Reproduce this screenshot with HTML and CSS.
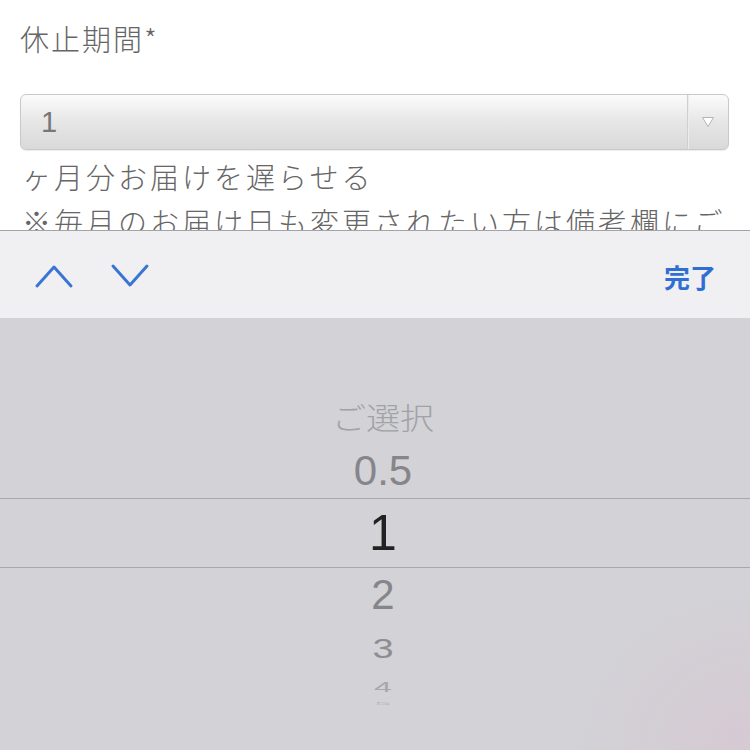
FILE: index.html
```html
<html>
<head>
    <meta charset="utf-8">
    <title>休止期間</title>
    <link rel="stylesheet" href="styles.css">
</head>
<body>
    <div class="form">
        <div class="field-label">休止期間*</div>
        <div class="select">
            <span class="select-value">1</span>
            <span class="select-arrow">
                <svg width="14" height="12" viewBox="0 0 14 12"><path d="M1.5 1.5 L12.5 1.5 L7 10.5 Z" fill="#fff" stroke="#b4b4b4" stroke-width="1"/></svg>
            </span>
        </div>
        <p class="note">ヶ月分お届けを遅らせる</p>
        <p class="note">※毎月のお届け日も変更されたい方は備考欄にご</p>
    </div>

    <div class="toolbar">
        <div class="nav">
            <svg class="chev" width="40" height="26" viewBox="0 0 40 26"><path d="M3 23 L20 4 L37 23" fill="none" stroke="#3a74d4" stroke-width="3" stroke-linecap="round" stroke-linejoin="round"/></svg>
            <svg class="chev" width="40" height="26" viewBox="0 0 40 26"><path d="M3 3 L20 22 L37 3" fill="none" stroke="#3a74d4" stroke-width="3" stroke-linecap="round" stroke-linejoin="round"/></svg>
        </div>
        <div class="done">完了</div>
    </div>

    <div class="picker">
        <div class="row row-far">ご選択</div>
        <div class="row row-near">0.5</div>
        <div class="row row-selected">1</div>
        <div class="row row-near">2</div>
        <div class="row row-3">3</div>
        <div class="row row-4">4</div>
        <div class="row row-5">5</div>
    </div>
</body>
</html>
```

FILE: styles.css
```css
body {
    margin: 0;
    width: 750px;
    height: 750px;
    overflow: hidden;
    background: white;
    font-family: "Noto Sans CJK JP", "Liberation Sans", sans-serif;
}

.form {
    height: 230px;
    overflow: hidden;
    padding: 0 21px 0 20px;
}

.field-label {
    font-size: 29px;
    letter-spacing: 2px;
    color: #666;
    padding-top: 16px;
    line-height: 44px;
    font-weight: 300;
}

.select {
    margin-top: 34px;
    height: 54px;
    border: 1px solid #c9c9c9;
    border-radius: 6px;
    background: linear-gradient(#fbfbfb, #e6e6e6 50%, #d9d9d9);
    display: flex;
    align-items: center;
    justify-content: space-between;
    box-shadow: 0 1px 1px rgba(0, 0, 0, 0.08);
}

.select-value {
    font-family: "Liberation Sans", sans-serif;
    font-size: 29px;
    color: #777;
    padding-left: 20px;
    font-weight: 300;
}

.select-arrow {
    width: 40px;
    height: 54px;
    border-left: 1px solid #cfcfcf;
    box-shadow: inset 1px 0 0 #ececec;
    display: flex;
    align-items: center;
    justify-content: center;
}

.note {
    margin: 0;
    font-size: 29px;
    letter-spacing: 3px;
    color: #666;
    line-height: 45px;
    font-weight: 300;
    white-space: nowrap;
    padding-left: 2px;
}

.note:first-of-type {
    margin-top: 4px;
}

.toolbar {
    height: 87px;
    border-top: 1px solid #a4a4a8;
    background: #f0f0f2;
    display: flex;
    align-items: center;
    justify-content: space-between;
    padding: 0 34px 0 34px;
}

.nav {
    display: flex;
    gap: 36px;
    padding-top: 2px;
}

.done {
    font-size: 26px;
    font-weight: bold;
    color: #2f6fd2;
    padding-top: 4px;
}

.picker {
    height: 432px;
    background:
        radial-gradient(ellipse 260px 240px at 100% 100%, rgba(214, 200, 210, 0.9), rgba(214, 200, 210, 0) 70%),
        #d2d2d7;
    display: flex;
    flex-direction: column;
    padding-top: 72px;
    padding-left: 16px;
    box-sizing: border-box;
}

.row {
    display: flex;
    align-items: center;
    justify-content: center;
    font-family: "Liberation Sans", "Noto Sans CJK JP", sans-serif;
    overflow: visible;
    line-height: 1;
}

.row-far {
    height: 54px;
    font-family: "Noto Sans CJK JP", sans-serif;
    font-size: 34px;
    color: #a2a2a6;
    transform: scaleY(0.86);
    font-weight: 300;
}

.row-near {
    height: 54px;
    font-size: 42px;
    color: #86868a;
}

.row-selected {
    height: 68px;
    margin-left: -16px;
    padding-left: 16px;
    border-top: 1px solid #a8a8ac;
    border-bottom: 1px solid #a8a8ac;
    font-size: 50px;
    color: #222;
}

.row-3 {
    height: 52px;
    font-size: 38px;
    color: #8e8e92;
    transform: scaleY(0.74);
}

.row-4 {
    height: 26px;
    font-size: 32px;
    color: #a8a8ac;
    transform: scaleY(0.45);
}

.row-5 {
    height: 8px;
    font-size: 28px;
    color: #b6b6ba;
    transform: scaleY(0.15);
}
```
